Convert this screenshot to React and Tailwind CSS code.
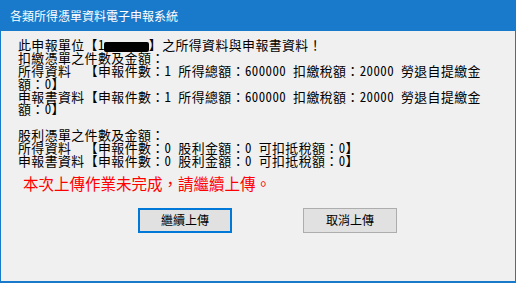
import React from "react";

const FONT = "font-['Noto_Sans_Mono_CJK_TC','Noto_Sans_CJK_TC',sans-serif]";

function Line({ children, className = "" }) {
  return (
    <div className={`whitespace-pre h-[12.9px] leading-[12.9px] ${className}`}>{children}</div>
  );
}

function Label({ children }) {
  return <span className="inline-block w-[66.7px]">{children}</span>;
}

export default function App() {
  return (
    <div className={`w-[516px] h-[283px] flex flex-col bg-[#f0f0f0] border-x border-b-2 border-[#1979ca] text-black ${FONT}`}>
      <div className="h-[31px] shrink-0 bg-[#1979ca] text-white text-[12px] pl-[9px] flex items-center">
        各類所得憑單資料電子申報系統
      </div>
      <div className="pl-[17px] pt-[8px] text-[12.9px] tracking-[0.43px]">
        <Line>
          此申報單位【1<span className="inline-block align-middle w-[45px] h-[10px] bg-black rounded-[2px] -ml-[1px]"></span>】之所得資料與申報書資料！
        </Line>
        <Line>扣繳憑單之件數及金額：</Line>
        <Line><Label>所得資料</Label>【申報件數：1 所得總額：600000 扣繳稅額：20000 勞退自提繳金</Line>
        <Line>額：0】</Line>
        <Line><Label>申報書資料</Label>【申報件數：1 所得總額：600000 扣繳稅額：20000 勞退自提繳金</Line>
        <Line>額：0】</Line>
        <Line> </Line>
        <Line>股利憑單之件數及金額：</Line>
        <Line><Label>所得資料</Label>【申報件數：0 股利金額：0 可扣抵稅額：0】</Line>
        <Line><Label>申報書資料</Label>【申報件數：0 股利金額：0 可扣抵稅額：0】</Line>
        <div className="mt-[5px] ml-[5px] text-[15.5px] tracking-normal leading-[20px] text-[#ff0000]">
          本次上傳作業未完成，請繼續上傳。
        </div>
      </div>
      <div className="flex pl-[137px] gap-[71px] mt-[15px]">
        <button className="w-[94px] h-[25px] bg-[#e1e1e1] border-2 border-[#0078d7] text-[12px] flex items-center justify-center">
          繼續上傳
        </button>
        <button className="w-[94px] h-[25px] bg-[#e1e1e1] border border-[#adadad] text-[12px] flex items-center justify-center">
          取消上傳
        </button>
      </div>
    </div>
  );
}
